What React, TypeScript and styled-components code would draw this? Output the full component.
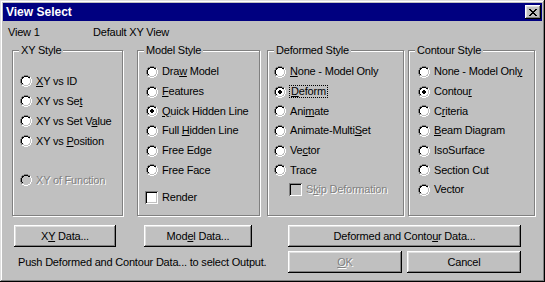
import React from "react";
import styled, { createGlobalStyle } from "styled-components";

const Global = createGlobalStyle`
  html, body { margin: 0; padding: 0; background: #c0c0c0; }
  body {
    font-family: "Liberation Sans", Arial, sans-serif;
    font-size: 11px;
    line-height: 13px;
    letter-spacing: -0.2px;
    color: #000;
  }
  u { text-decoration: underline; text-underline-offset: 1px; }
`;

const Window = styled.div`
  width: 545px;
  height: 282px;
  box-sizing: border-box;
  padding: 3px;
  background: #c0c0c0;
  box-shadow: inset -1px -1px #000, inset 1px 1px #dfdfdf, inset -2px -2px #808080, inset 2px 2px #fff;
  display: flex;
  flex-direction: column;
`;

const TitleBar = styled.div`
  height: 18px;
  flex: none;
  background: #000080;
  display: flex;
  align-items: center;
  justify-content: space-between;
  padding: 0 1px 0 3px;
`;

const Title = styled.span`
  color: #fff;
  font-weight: bold;
  font-size: 12px;
  letter-spacing: 0;
`;

const CloseButton = styled.div`
  width: 16px;
  height: 14px;
  background: #c0c0c0;
  box-shadow: inset -1px -1px #000, inset 1px 1px #fff, inset -2px -2px #808080, inset 2px 2px #dfdfdf;
  display: flex;
  align-items: center;
  justify-content: center;
`;

const InfoRow = styled.div`
  height: 22px;
  flex: none;
  display: flex;
  align-items: center;
  padding-left: 5px;
`;

const InfoCell = styled.span<{ $w?: number }>`
  width: ${(p) => (p.$w ? `${p.$w}px` : "auto")};
`;

const GroupRow = styled.div`
  display: flex;
  flex: none;
  padding-left: 9px;
`;

const Group = styled.div<{ $w: number; $mr: number; $pt: number; $pl: number }>`
  position: relative;
  box-sizing: border-box;
  width: ${(p) => p.$w}px;
  height: 166px;
  margin-top: 7px;
  margin-right: ${(p) => p.$mr}px;
  padding-top: ${(p) => p.$pt}px;
  padding-left: ${(p) => p.$pl}px;
  border: 1px solid #808080;
  box-shadow: inset 1px 1px #fff, 1px 1px #fff;
  display: flex;
  flex-direction: column;
`;

const Legend = styled.span`
  position: absolute;
  top: -7px;
  left: 6px;
  padding: 0 2px;
  background: #c0c0c0;
  line-height: 13px;
  white-space: nowrap;
`;

const Row = styled.div<{ $h?: number; $mt?: number; $indent?: number; $disabled?: boolean }>`
  display: flex;
  align-items: center;
  height: ${(p) => p.$h ?? 19.7}px;
  flex: none;
  margin-top: ${(p) => p.$mt ?? 0}px;
  padding-left: ${(p) => p.$indent ?? 0}px;
  white-space: nowrap;
  color: ${(p) => (p.$disabled ? "#808080" : "#000")};
  text-shadow: ${(p) => (p.$disabled ? "1px 1px 0 #fff" : "none")};
`;

const Slot = styled.span`
  width: 13px;
  height: 13px;
  flex: none;
  display: flex;
  align-items: center;
  justify-content: flex-end;
  margin-right: 4px;
`;

const Check = styled.span<{ $disabled?: boolean }>`
  width: 13px;
  height: 13px;
  box-sizing: border-box;
  flex: none;
  background: ${(p) => (p.$disabled ? "#c0c0c0" : "#fff")};
  box-shadow: inset 1px 1px #808080, inset -1px -1px #fff, inset 2px 2px #000, inset -2px -2px #c0c0c0;
`;

const Focus = styled.span`
  display: inline-block;
  line-height: 11px;
  height: 11px;
  padding: 0 1px;
  outline: 1px dotted #000;
`;

const Bottom = styled.div`
  display: flex;
  flex: none;
  margin-top: 9px;
  padding-left: 11px;
`;

const LeftCol = styled.div`
  width: 274px;
  display: flex;
  flex-direction: column;
  gap: 4px;
`;

const RightCol = styled.div`
  width: 233px;
  display: flex;
  flex-direction: column;
  gap: 4px;
`;

const BtnRow = styled.div<{ $gap: number }>`
  display: flex;
  gap: ${(p) => p.$gap}px;
`;

const Status = styled.div`
  height: 22px;
  box-sizing: border-box;
  padding: 1px 0 0 4px;
  display: flex;
  align-items: center;
  white-space: nowrap;
`;

const Button = styled.button<{ $w?: number }>`
  width: ${(p) => (p.$w ? `${p.$w}px` : "100%")};
  height: 22px;
  flex: none;
  margin: 0;
  padding: 0;
  border: 0;
  background: #c0c0c0;
  font: inherit;
  letter-spacing: inherit;
  color: #000;
  box-shadow: inset -1px -1px #000, inset 1px 1px #fff, inset -2px -2px #808080, inset 2px 2px #dfdfdf;
  display: flex;
  align-items: center;
  justify-content: center;
  white-space: nowrap;
  &:disabled {
    color: #808080;
    text-shadow: 1px 1px 0 #fff;
  }
`;

const RADIO_MAP = [
  "....GGGG....",
  "..GGKKKKGG..",
  ".GKKIIIIKKW.",
  ".GKIIIIIILW.",
  "GKIIIIIIIILW",
  "GKIIIIIIIILW",
  "GKIIIIIIIILW",
  "GKIIIIIIIILW",
  ".GKIIIIIILW.",
  ".GLLIIIILLW.",
  "..WWLLLLWW..",
  "....WWWW....",
];

function Radio({ checked, disabled }: { checked?: boolean; disabled?: boolean }) {
  const colors: Record<string, string> = {
    G: "#808080",
    K: "#000",
    W: "#fff",
    L: "#c0c0c0",
    I: disabled ? "#c0c0c0" : "#fff",
  };
  const rects: React.ReactNode[] = [];
  RADIO_MAP.forEach((row, y) => {
    let x = 0;
    while (x < row.length) {
      const c = row[x];
      let e = x;
      while (e < row.length && row[e] === c) e++;
      if (c !== ".") {
        rects.push(<rect key={`${y}-${x}`} x={x} y={y} width={e - x} height={1} fill={colors[c]} />);
      }
      x = e;
    }
  });
  const dot = disabled ? "#808080" : "#000";
  return (
    <svg width={12} height={12} viewBox="0 0 12 12" shapeRendering="crispEdges">
      {rects}
      {checked && (
        <g fill={dot}>
          <rect x={5} y={4} width={2} height={1} />
          <rect x={4} y={5} width={4} height={2} />
          <rect x={5} y={7} width={2} height={1} />
        </g>
      )}
    </svg>
  );
}

function CloseX() {
  return (
    <svg width={8} height={7} viewBox="0 0 8 7" shapeRendering="crispEdges">
      <g fill="#000">
        <rect x={0} y={0} width={2} height={1} />
        <rect x={6} y={0} width={2} height={1} />
        <rect x={1} y={1} width={2} height={1} />
        <rect x={5} y={1} width={2} height={1} />
        <rect x={2} y={2} width={4} height={1} />
        <rect x={3} y={3} width={2} height={1} />
        <rect x={2} y={4} width={4} height={1} />
        <rect x={1} y={5} width={2} height={1} />
        <rect x={5} y={5} width={2} height={1} />
        <rect x={0} y={6} width={2} height={1} />
        <rect x={6} y={6} width={2} height={1} />
      </g>
    </svg>
  );
}

type OptProps = {
  children: React.ReactNode;
  checked?: boolean;
  disabled?: boolean;
  h?: number;
  mt?: number;
};

function RadioOpt({ children, checked, disabled, h, mt }: OptProps) {
  return (
    <Row $h={h} $mt={mt} $disabled={disabled}>
      <Slot>
        <Radio checked={checked} disabled={disabled} />
      </Slot>
      <span>{children}</span>
    </Row>
  );
}

function CheckOpt({ children, disabled, h, mt, indent }: OptProps & { indent?: number }) {
  return (
    <Row $h={h} $mt={mt} $disabled={disabled} $indent={indent}>
      <Slot>
        <Check $disabled={disabled} />
      </Slot>
      <span>{children}</span>
    </Row>
  );
}

export default function App() {
  return (
    <>
      <Global />
      <Window>
        <TitleBar>
          <Title>View Select</Title>
          <CloseButton>
            <CloseX />
          </CloseButton>
        </TitleBar>

        <InfoRow>
          <InfoCell $w={85}>View 1</InfoCell>
          <InfoCell>Default XY View</InfoCell>
        </InfoRow>

        <GroupRow>
          <Group $w={111} $mr={14} $pt={20} $pl={6}>
            <Legend>XY Style</Legend>
            <RadioOpt h={20}>
              <u>X</u>Y vs ID
            </RadioOpt>
            <RadioOpt h={20}>
              XY vs Se<u>t</u>
            </RadioOpt>
            <RadioOpt h={20}>
              XY vs Set V<u>a</u>lue
            </RadioOpt>
            <RadioOpt h={20}>
              XY vs <u>P</u>osition
            </RadioOpt>
            <RadioOpt h={20} mt={19} disabled>
              XY of Function
            </RadioOpt>
          </Group>

          <Group $w={123} $mr={7} $pt={11} $pl={7}>
            <Legend>Model Style</Legend>
            <RadioOpt>
              Dra<u>w</u> Model
            </RadioOpt>
            <RadioOpt>
              <u>F</u>eatures
            </RadioOpt>
            <RadioOpt checked>
              <u>Q</u>uick Hidden Line
            </RadioOpt>
            <RadioOpt>
              Full <u>H</u>idden Line
            </RadioOpt>
            <RadioOpt>Free Edge</RadioOpt>
            <RadioOpt>Free Face</RadioOpt>
            <CheckOpt mt={8}>Render</CheckOpt>
          </Group>

          <Group $w={137} $mr={4} $pt={11} $pl={5}>
            <Legend>Deformed Style</Legend>
            <RadioOpt>
              <u>N</u>one - Model Only
            </RadioOpt>
            <RadioOpt checked>
              <Focus>
                <u>D</u>eform
              </Focus>
            </RadioOpt>
            <RadioOpt>
              Ani<u>m</u>ate
            </RadioOpt>
            <RadioOpt>
              Animate-Multi<u>S</u>et
            </RadioOpt>
            <RadioOpt>
              Ve<u>c</u>tor
            </RadioOpt>
            <RadioOpt>Trace</RadioOpt>
            <CheckOpt disabled indent={16}>
              S<u>k</u>ip Deformation
            </CheckOpt>
          </Group>

          <Group $w={127} $mr={0} $pt={11} $pl={8}>
            <Legend>Contour Style</Legend>
            <RadioOpt>
              None - Model Onl<u>y</u>
            </RadioOpt>
            <RadioOpt checked>
              Contou<u>r</u>
            </RadioOpt>
            <RadioOpt>
              C<u>r</u>iteria
            </RadioOpt>
            <RadioOpt>
              <u>B</u>eam Diagram
            </RadioOpt>
            <RadioOpt>IsoSurface</RadioOpt>
            <RadioOpt>Section Cut</RadioOpt>
            <RadioOpt>Vector</RadioOpt>
          </Group>
        </GroupRow>

        <Bottom>
          <LeftCol>
            <BtnRow $gap={28}>
              <Button $w={102}>
                <span>
                  X<u>Y</u> Data...
                </span>
              </Button>
              <Button $w={108}>
                <span>
                  Mod<u>e</u>l Data...
                </span>
              </Button>
            </BtnRow>
            <Status>Push Deformed and Contour Data... to select Output.</Status>
          </LeftCol>
          <RightCol>
            <Button>
              <span>
                Deformed and Conto<u>u</u>r Data...
              </span>
            </Button>
            <BtnRow $gap={5}>
              <Button $w={114} disabled>
                <span>
                  <u>O</u>K
                </span>
              </Button>
              <Button $w={114}>
                <span>Cancel</span>
              </Button>
            </BtnRow>
          </RightCol>
        </Bottom>
      </Window>
    </>
  );
}
